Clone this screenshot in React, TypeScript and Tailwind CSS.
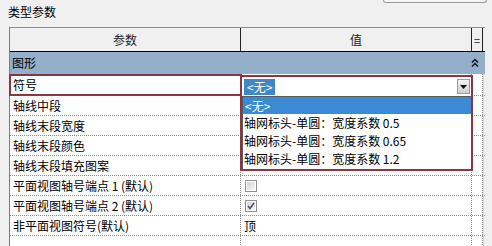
import React from "react";

const rows: { label: string; value?: React.ReactNode; h?: string }[] = [
  { label: "符号", h: "h-[22px]" },
  { label: "轴线中段" },
  { label: "轴线末段宽度" },
  { label: "轴线末段颜色" },
  { label: "轴线末段填充图案" },
  { label: "平面视图轴号端点 1 (默认)", value: "unchecked" },
  { label: "平面视图轴号端点 2 (默认)", value: "checked" },
  { label: "非平面视图符号(默认)", value: "顶" },
  { label: "" },
];

function Checkbox({ checked }: { checked: boolean }) {
  return (
    <div className="w-[12px] h-[12px] border border-[#8e8f8f] bg-white p-[1px]">
      <div className="w-full h-full bg-gradient-to-br from-[#d4d4d4] to-[#f7f7f7] flex items-center justify-center">
        {checked && (
          <svg width="8" height="8" viewBox="0 0 8 8">
            <path d="M1 4 L3 6.5 L7 1" fill="none" stroke="#4b4d6e" strokeWidth="1.6" />
          </svg>
        )}
      </div>
    </div>
  );
}

export default function App() {
  return (
    <div className="w-[492px] h-[246px] overflow-hidden bg-[#f0f0f0] text-[12px] leading-[14px] text-black [font-family:'Noto_Sans_CJK_SC','Microsoft_YaHei',sans-serif]">
      <div className="flex justify-between items-start h-[27px]">
        <div className="pl-[8px] pt-[5px]">类型参数</div>
        <div className="mr-[5px] h-[3px] w-[104px] border border-t-0 border-[#9a9a9a] rounded-b-[3px] bg-[#f5f5f5]" />
      </div>
      <div className="ml-[9px] w-[476px] border-l border-[#7d7d7d] bg-white">
        {/* header */}
        <div className="flex h-[25px] border-t border-[#8c8c8c] border-b border-b-black bg-[#f0f0f0] text-[#222]">
          <div className="w-[231px] border-r border-[#222] flex items-center justify-center">参数</div>
          <div className="w-[231px] border-r border-[#222] flex items-center justify-center">值</div>
          <div className="w-[11px] border-r border-[#222] flex items-center justify-center text-[11px]">=</div>
          <div className="flex-1 bg-[#f0f0f0]" />
        </div>
        {/* section */}
        <div className="flex h-[22px] items-center justify-between bg-[#93afca] pl-[2px] pr-[6px]">
          <span>图形</span>
          <svg width="8" height="10" viewBox="0 0 8 10">
            <path d="M1 4.5 L4 1.5 L7 4.5" fill="none" stroke="#111" strokeWidth="1.4" />
            <path d="M1 8.5 L4 5.5 L7 8.5" fill="none" stroke="#111" strokeWidth="1.4" />
          </svg>
        </div>
        {/* body */}
        <div className="relative">
          {rows.map((r, i) => (
            <div
              key={i}
              className={`flex ${r.h ?? "h-[20px]"} border-b border-dotted border-[#8a8a8a] bg-white`}
            >
              <div className="w-[231px] border-r border-dotted border-[#8a8a8a] flex items-center pl-[3px]">
                {r.label}
              </div>
              <div className="w-[231px] border-r border-dotted border-[#8a8a8a] flex items-center pl-[4px]">
                {r.value === "unchecked" && <Checkbox checked={false} />}
                {r.value === "checked" && <Checkbox checked={true} />}
                {r.value === "顶" && <span className="-ml-[1px]">顶</span>}
              </div>
              <div className="w-[11px] border-r border-dotted border-[#8a8a8a]" />
              <div className="flex-1 bg-[#f0f0f0] border-l border-[#d8d8d8]" />
            </div>
          ))}
          {/* red frame around 符号 label */}
          <div className="absolute left-[-1px] top-0 w-[233px] h-[22px] border-2 border-[#8c3642] pointer-events-none" />
          {/* dropdown */}
          <div className="absolute left-[230px] top-[1px] w-[233px] h-[96px] border-2 border-[#8c3642] bg-white flex flex-col">
            <div className="flex items-center justify-between h-[19px] pl-[2px] pr-[1px]">
              <span className="bg-[#3f88c8] text-white px-[3px] h-[16px] flex items-center">&lt;无&gt;</span>
              <div className="w-[13px] h-[15px] border border-[#9c9c9c] bg-gradient-to-b from-[#f2f2f2] to-[#cfcfcf] flex items-center justify-center">
                <svg width="7" height="4" viewBox="0 0 7 4">
                  <path d="M0 0 H7 L3.5 4 Z" fill="#111" />
                </svg>
              </div>
            </div>
            <div className="flex-1 ml-[0px] border-t border-l border-[#5a5a5a] flex flex-col">
              <div className="h-[17px] bg-[#3a8ad4] text-white pl-[2px] flex items-center">&lt;无&gt;</div>
              <div className="h-[18px] pl-[1px] flex items-center">轴网标头-单圆：宽度系数 0.5</div>
              <div className="h-[18px] pl-[1px] flex items-center">轴网标头-单圆：宽度系数 0.65</div>
              <div className="h-[18px] pl-[1px] flex items-center">轴网标头-单圆：宽度系数 1.2</div>
            </div>
          </div>
        </div>
      </div>
    </div>
  );
}
